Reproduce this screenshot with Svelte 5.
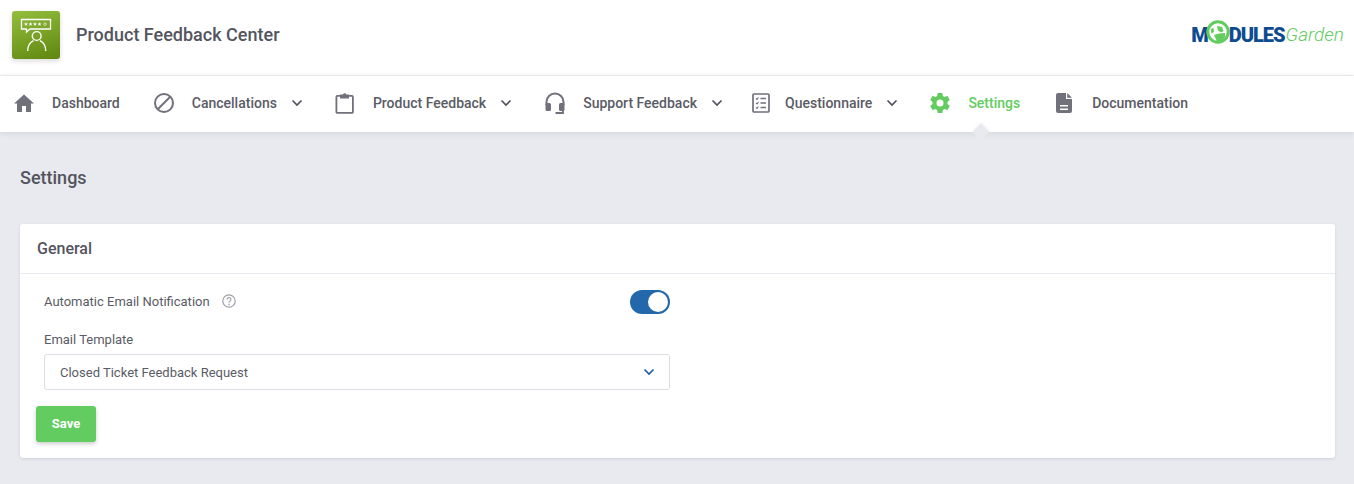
<script>
  const navItems = [
    { label: "Dashboard", icon: "home" },
    { label: "Cancellations", icon: "ban", caret: true },
    { label: "Product Feedback", icon: "clipboard", caret: true },
    { label: "Support Feedback", icon: "headset", caret: true },
    { label: "Questionnaire", icon: "list", caret: true },
    { label: "Settings", icon: "gear", active: true },
    { label: "Documentation", icon: "doc" },
  ];

  let notify = $state(true);
</script>

{#snippet chevron(cls)}
  <svg class={cls} viewBox="0 0 12 8" width="12" height="8">
    <path d="M1.5 1.5 6 6l4.5-4.5" fill="none" stroke="currentColor" stroke-width="1.7" />
  </svg>
{/snippet}

{#snippet star(x)}
  <path fill="#fff" transform="translate({x} 13)" d="M0-1.900.55-.6 1.900-.5.9.4 1.200 1.700 0 1 -1.200 1.700-.9.4-1.900-.5-.55-.6z" />
{/snippet}

<div class="page">
  <header class="top">
    <div class="brand">
      <div class="app-icon">
        <svg viewBox="0 0 48 48" width="48" height="48">
          <path d="M9.5 8.500h29v9.500H18l-3.500 3V18h-5z" fill="none" stroke="#fff" stroke-width="1.300" />
          {@render star(14)}
          {@render star(18.500)}
          {@render star(23)}
          {@render star(27.500)}
          <circle cx="33" cy="13.200" r="1.300" fill="none" stroke="#fff" stroke-width="0.6" />
          <circle cx="24.700" cy="25" r="4.400" fill="none" stroke="#fff" stroke-width="1.400" />
          <path d="M15.700 40c0-5.500 2.500-8.800 5.800-10.300M33.700 40c0-5.500-2.500-8.800-5.800-10.300" fill="none" stroke="#fff" stroke-width="1.400" />
        </svg>
      </div>
      <span class="app-name">Product Feedback Center</span>
    </div>
    <div class="mg-logo">
      <span class="mg-bold">M</span>
      <svg class="mg-globe" viewBox="0 0 24 24" width="24" height="24">
        <circle cx="12" cy="12" r="10.200" fill="#fff" stroke="#62cc5e" stroke-width="3" />
        <path d="M11 6l5 1 1.500 4-2.500 1.500-3-2zM4.500 9l3-1 .5 4-2.500 1.500zM8 15l5-1.500 6-.5v4l-4 5h-4l-1-3z" fill="#62cc5e" />
      </svg>
      <span class="mg-bold">DULES</span><span class="mg-light">Garden</span>
    </div>
  </header>

  <nav class="menu">
    {#each navItems as item}
      <div class="menu-item" class:active={item.active} class:has-caret={item.caret}>
        <span class="menu-icon {item.icon}">
          {#if item.icon === "home"}
            <svg viewBox="0 0 20 18" width="20" height="18"><path d="M10 .5 0 9.500h3V18h5v-6h4v6h5V9.500h3z" fill="currentColor" /></svg>
          {:else if item.icon === "ban"}
            <svg viewBox="0 0 20 20" width="20" height="20">
              <circle cx="10" cy="10" r="9" fill="none" stroke="currentColor" stroke-width="2" />
              <path d="M4 16 16 4" stroke="currentColor" stroke-width="2" />
            </svg>
          {:else if item.icon === "clipboard"}
            <svg viewBox="0 0 20 22" width="20" height="22">
              <rect x="1.400" y="3.900" width="16.500" height="17" rx="1" fill="none" stroke="currentColor" stroke-width="1.800" />
              <path d="M5 6.500V2.500h3a1.700 1.700 0 0 1 3.300 0H14v4z" fill="currentColor" />
            </svg>
          {:else if item.icon === "headset"}
            <svg viewBox="0 0 20 22" width="20" height="22">
              <path d="M1.500 13V10a8.500 8.500 0 0 1 17 0V13" fill="none" stroke="currentColor" stroke-width="2" />
              <rect x=".5" y="11" width="5.500" height="8" rx="1.500" fill="currentColor" />
              <rect x="14" y="11" width="5.500" height="8" rx="1.500" fill="currentColor" />
              <path d="M18 18v3h-7.500" fill="none" stroke="currentColor" stroke-width="1.800" />
            </svg>
          {:else if item.icon === "list"}
            <svg viewBox="0 0 18 20" width="18" height="20">
              <rect x="1" y="1" width="16" height="18" rx="1" fill="none" stroke="currentColor" stroke-width="1.700" />
              <path d="M4 5.500 5 6.500 6.500 4.500M4 10 5 11 6.500 9M4 14.500 5 15.500 6.500 13.500" fill="none" stroke="currentColor" stroke-width="1.100" />
              <path d="M8.500 5.500H14M8.500 10H14M8.500 14.500H14" stroke="currentColor" stroke-width="1.400" />
            </svg>
          {:else if item.icon === "gear"}
            <svg viewBox="0 0 24 24" width="24" height="24">
              <path fill="currentColor" fill-rule="evenodd" d="M19.430 12.980c.04-.32.070-.650.070-.980s-.030-.660-.070-.980l2.110-1.650c.190-.150.240-.420.120-.640l-2-3.460c-.120-.220-.390-.300-.610-.220l-2.490 1c-.520-.400-1.080-.730-1.690-.980l-.380-2.650A.490.490 0 0 0 14 2h-4c-.250 0-.460.180-.490.420l-.380 2.650c-.610.250-1.170.590-1.690.980l-2.490-1c-.230-.090-.490 0-.610.220l-2 3.460c-.130.220-.070.490.120.640l2.110 1.650c-.040.320-.070.650-.070.980s.030.660.070.980l-2.110 1.650c-.190.150-.240.420-.120.640l2 3.460c.120.220.390.300.610.220l2.490-1c.520.400 1.080.730 1.690.980l.380 2.650c.030.240.240.420.490.420h4c.250 0 .460-.180.490-.420l.380-2.650c.610-.250 1.170-.590 1.690-.980l2.490 1c.230.090.490 0 .610-.220l2-3.460c.120-.220.070-.490-.120-.640zM12 15.500a3.500 3.500 0 1 1 0-7 3.500 3.500 0 0 1 0 7z" />
            </svg>
          {:else}
            <svg viewBox="0 0 16 20" width="16" height="20">
              <path fill="currentColor" fill-rule="evenodd" d="M2 0h8v6h6v12a2 2 0 0 1-2 2H2a2 2 0 0 1-2-2V2a2 2 0 0 1 2-2zM4 12v1.600h8V12zM4 15.500v1.600h8v-1.600z" />
              <path fill="currentColor" d="M11.200 0 16 4.800H11.200z" />
            </svg>
          {/if}
        </span>
        <span class="menu-label">{item.label}</span>
        {#if item.caret}
          {@render chevron("menu-caret")}
        {/if}
        {#if item.active}
          <span class="menu-arrow"></span>
        {/if}
      </div>
    {/each}
  </nav>

  <main class="content">
    <h1 class="page-title">Settings</h1>

    <section class="card">
      <div class="card-head">General</div>
      <div class="card-body">
        <div class="form">
          <div class="switch-row">
            <span class="field-label">
              Automatic Email Notification
              <svg class="help" viewBox="0 0 14 14" width="14" height="14">
                <circle cx="7" cy="7" r="6.200" fill="none" stroke="currentColor" stroke-width="1.200" />
                <path d="M5.100 5.500a1.900 1.900 0 1 1 2.900 1.600c-.7.400-1 .8-1 1.500" fill="none" stroke="currentColor" stroke-width="1.200" />
                <circle cx="7" cy="10.400" r=".8" fill="currentColor" />
              </svg>
            </span>
            <button class="switch" class:on={notify} aria-label="Toggle notification" onclick={() => (notify = !notify)}>
              <span class="knob"></span>
            </button>
          </div>
          <div class="field-label template-label">Email Template</div>
          <div class="select">
            <span>Closed Ticket Feedback Request</span>
            {@render chevron("select-caret")}
          </div>
        </div>
        <button class="save">Save</button>
      </div>
    </section>
  </main>
</div>

<style>
  :global(body) {
    margin: 0;
    background: #e9eaef;
  }

  .page {
    min-height: 484px;
    font-family: Roboto, "Liberation Sans", sans-serif;
    color: #5a5b65;
  }

  .top {
    height: 76px;
    box-sizing: border-box;
    background: #fff;
    border-bottom: 1px solid #f0f0f3;
    display: flex;
    align-items: center;
    justify-content: space-between;
    padding: 0 10px 6px 12px;
  }

  .brand {
    display: flex;
    align-items: center;
    gap: 16px;
  }

  .app-icon {
    width: 48px;
    height: 48px;
    border-radius: 3px;
    background: linear-gradient(160deg, #93bf3e, #5f860f);
    box-shadow: 0 2px 5px rgba(0, 0, 0, 0.15);
  }

  .app-icon svg {
    display: block;
  }

  .app-name {
    font-size: 18px;
    font-weight: 500;
    color: #53545e;
  }

  .mg-logo {
    display: flex;
    align-items: center;
    font-size: 20px;
    line-height: 24px;
    letter-spacing: -1px;
  }

  .mg-bold {
    font-weight: 900;
    color: #0e4c92;
  }

  .mg-globe {
    margin: -6px -1px 0 -2px;
  }

  .mg-light {
    font-size: 19px;
    font-weight: 300;
    font-style: italic;
    color: #62cc5e;
    letter-spacing: 0;
    margin-left: 1px;
  }

  .menu {
    height: 56px;
    background: #fff;
    display: flex;
    align-items: center;
    gap: 32px;
    padding-left: 12px;
    box-shadow: 0 1px 6px rgba(50, 50, 70, 0.12);
    position: relative;
  }

  .menu-item {
    display: flex;
    align-items: center;
    position: relative;
    height: 100%;
    padding-bottom: 2px;
    box-sizing: border-box;
    font-size: 14px;
    font-weight: 500;
    color: #5a5b65;
  }

  .has-caret {
    margin-right: -2px;
  }

  .menu-icon {
    width: 24px;
    margin-right: 16px;
    display: flex;
    justify-content: center;
    color: #70717b;
  }

  .menu-icon.headset {
    width: 25px;
  }

  .menu-icon.list {
    width: 18px;
    margin: 0 15px 0 -1px;
  }

  .menu-icon svg {
    display: block;
  }

  .menu-caret {
    margin-left: 14px;
    color: #51525c;
  }

  .active,
  .active .menu-icon {
    color: #63cc60;
  }

  .menu-arrow {
    position: absolute;
    left: 47px;
    bottom: 0;
    width: 12px;
    height: 12px;
    background: #e9eaef;
    transform: translateY(50%) rotate(45deg);
    box-shadow: -1px -1px 2px rgba(50, 50, 70, 0.06);
  }

  .content {
    padding: 36px 19px 26px 20px;
  }

  .page-title {
    margin: 0 0 36px;
    font-size: 18px;
    line-height: 20px;
    font-weight: 500;
    color: #53545e;
  }

  .card {
    background: #fff;
    border-radius: 3px;
    box-shadow: 0 1px 3px rgba(50, 50, 70, 0.12);
  }

  .card-head {
    height: 49px;
    line-height: 49px;
    padding-left: 17px;
    font-size: 16px;
    font-weight: 500;
    color: #53545e;
    border-bottom: 1px solid #e9eaef;
  }

  .card-body {
    padding: 16px;
  }

  .form {
    width: 626px;
    margin-left: 8px;
  }

  .switch-row {
    display: flex;
    align-items: center;
    justify-content: space-between;
    height: 24px;
  }

  .field-label {
    font-size: 13px;
    line-height: 18px;
    color: #5a5b65;
  }

  .help {
    color: #a1a2aa;
    margin-left: 9px;
    vertical-align: -2px;
  }

  .switch {
    width: 40px;
    height: 24px;
    padding: 0;
    border: none;
    border-radius: 12px;
    background: #c8c9d0;
    display: flex;
    align-items: center;
    cursor: pointer;
  }

  .switch.on {
    background: #2468ac;
    justify-content: flex-end;
  }

  .knob {
    width: 20px;
    height: 20px;
    margin: 0 2px;
    border-radius: 50%;
    background: #fff;
  }

  .template-label {
    margin-top: 17px;
    margin-bottom: 5px;
  }

  .select {
    height: 36px;
    box-sizing: border-box;
    border: 1px solid #dcdce6;
    border-radius: 3px;
    display: flex;
    align-items: center;
    justify-content: space-between;
    padding: 0 14px 0 15px;
    font-size: 13px;
    color: #5a5b65;
  }

  .select-caret {
    color: #1d5f9f;
  }

  .save {
    display: block;
    margin-top: 16px;
    padding: 0 0 2px;
    width: 60px;
    height: 36px;
    border: none;
    border-radius: 3px;
    background: #63cc60;
    color: #fff;
    font-family: inherit;
    font-size: 13px;
    font-weight: 700;
    box-shadow: 0 2px 4px rgba(0, 0, 0, 0.2);
    cursor: pointer;
  }
</style>
